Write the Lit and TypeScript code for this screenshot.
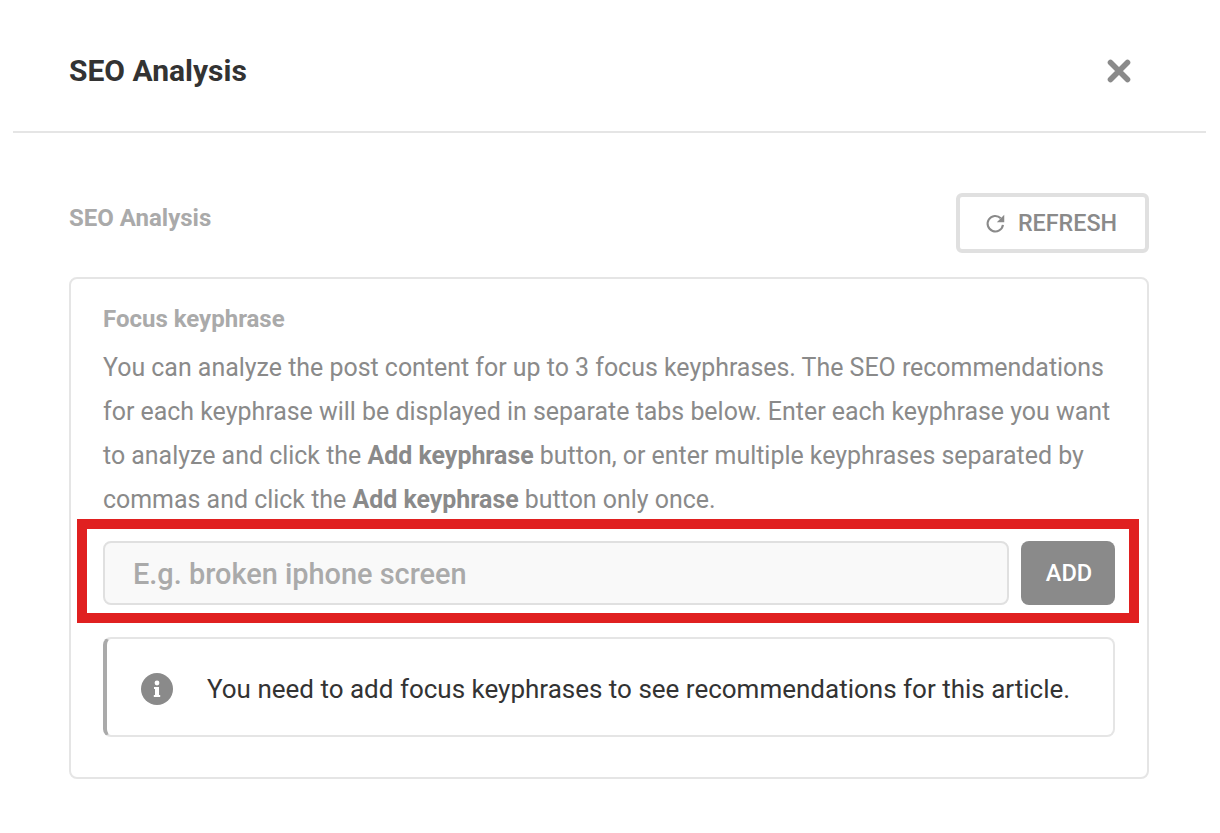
import { LitElement, html, css } from "lit";
import { customElement } from "lit/decorators.js";

@customElement("app-root")
export class AppRoot extends LitElement {
  static styles = css`
    :host {
      display: block;
      width: 1220px;
      height: 833px;
      background: #fff;
      font-family: Roboto, sans-serif;
      position: relative;
      overflow: hidden;
    }
    .head {
      margin: 0 14px 0 13px;
      height: 131px;
      padding: 0 75px 0 56px;
      border-bottom: 2px solid #e5e5e5;
      display: flex;
      align-items: center;
      justify-content: space-between;
    }
    .head h1 {
      margin: 11px 0 0;
      font-size: 30px;
      font-weight: 700;
      color: #333;
      line-height: 34px;
    }
    .close {
      width: 24px;
      height: 24px;
      display: block;
      margin-top: 10px;
    }
    .body {
      padding: 60px 71px 0 69px;
    }
    .row {
      display: flex;
      justify-content: space-between;
      align-items: flex-start;
    }
    .row h2 {
      margin: 11px 0 0;
      font-size: 24px;
      line-height: 28px;
      font-weight: 700;
      color: #aaa;
    }
    .refresh {
      box-sizing: border-box;
      width: 193px;
      height: 60px;
      border: 4px solid #e0e0e0;
      border-radius: 6px;
      display: flex;
      align-items: center;
      justify-content: center;
      gap: 12px;
      padding-right: 3px;
      font-size: 23.3px;
      font-weight: 500;
      color: #8a8a8a;
      background: #fff;
    }
    .refresh svg { width: 21px; height: 21px; display: block; }
    .card {
      box-sizing: border-box;
      margin-top: 24px;
      height: 502px;
      border: 2px solid #e5e5e5;
      border-radius: 8px;
      padding: 24px 32px 0;
    }
    .card h3 {
      margin: 0;
      font-size: 24px;
      line-height: 32px;
      font-weight: 700;
      color: #aaa;
    }
    .card p {
      margin: 11px 0 0;
      font-size: 24.93px;
      line-height: 44px;
      color: #8a8a8a;
      white-space: nowrap;
    }
    .card p b { font-weight: 700; }
    .entry {
      display: flex;
      gap: 12px;
      margin-top: 19px;
      height: 64px;
    }
    .input {
      box-sizing: border-box;
      flex: 1;
      border: 2px solid #e0e0e0;
      border-radius: 8px;
      background: #f9f9f9;
      display: flex;
      align-items: center;
      padding: 2px 0 0 28px;
      font-size: 28.9px;
      font-weight: 500;
      color: #aaa;
    }
    .add {
      box-sizing: border-box;
      width: 94px;
      padding-left: 2px;
      border-radius: 8px;
      background: #8a8a8a;
      color: #fff;
      font-size: 23.6px;
      font-weight: 500;
      display: flex;
      align-items: center;
      justify-content: center;
    }
    .notice {
      box-sizing: border-box;
      margin-top: 32px;
      height: 100px;
      border: 2px solid #e5e5e5;
      border-left: 4px solid #aaa;
      border-radius: 8px;
      display: flex;
      align-items: center;
      padding: 4px 0 0 34px;
      gap: 34px;
      font-size: 26px;
      color: #333;
    }
    .notice svg { width: 32px; height: 32px; display: block; flex: none; }
    .mark {
      position: absolute;
      left: 77px;
      top: 519px;
      width: 1062px;
      height: 104px;
      box-sizing: border-box;
      border: 10px solid #e02020;
      pointer-events: none;
    }
  `;

  render() {
    return html`
      <div class="head">
        <h1>SEO Analysis</h1>
        <svg class="close" viewBox="0 0 24 24" aria-hidden="true">
          <path d="M3.5 3.5L20.5 20.5M20.5 3.5L3.5 20.5" stroke="#8a8a8a" stroke-width="5.6" stroke-linecap="round" fill="none"/>
        </svg>
      </div>
      <div class="body">
        <div class="row">
          <h2>SEO Analysis</h2>
          <div class="refresh">
            <svg viewBox="0 0 24 24" aria-hidden="true">
              <path d="M20.5 13.5A8.8 8.8 0 1 1 18 6" stroke="#8a8a8a" stroke-width="2.4" fill="none"/>
              <path d="M22 2V10.5H13.5Z" fill="#8a8a8a"/>
            </svg>
            <span>REFRESH</span>
          </div>
        </div>
        <div class="card">
          <h3>Focus keyphrase</h3>
          <p>You can analyze the post content for up to 3 focus keyphrases. The SEO recommendations<br>for each keyphrase will be displayed in separate tabs below. Enter each keyphrase you want<br>to analyze and click the <b>Add keyphrase</b> button, or enter multiple keyphrases separated by<br>commas and click the <b>Add keyphrase</b> button only once.</p>
          <div class="entry">
            <div class="input">E.g. broken iphone screen</div>
            <div class="add">ADD</div>
          </div>
          <div class="notice">
            <svg viewBox="0 0 32 32" aria-hidden="true">
              <circle cx="16" cy="16" r="16" fill="#8a8a8a"/>
              <circle cx="16" cy="10" r="2.4" fill="#fff"/>
              <path d="M13 14H18V22H19.2V24H12.8V22H14V16H13Z" fill="#fff"/>
            </svg>
            <span>You need to add focus keyphrases to see recommendations for this article.</span>
          </div>
        </div>
      </div>
      <div class="mark"></div>
    `;
  }
}
